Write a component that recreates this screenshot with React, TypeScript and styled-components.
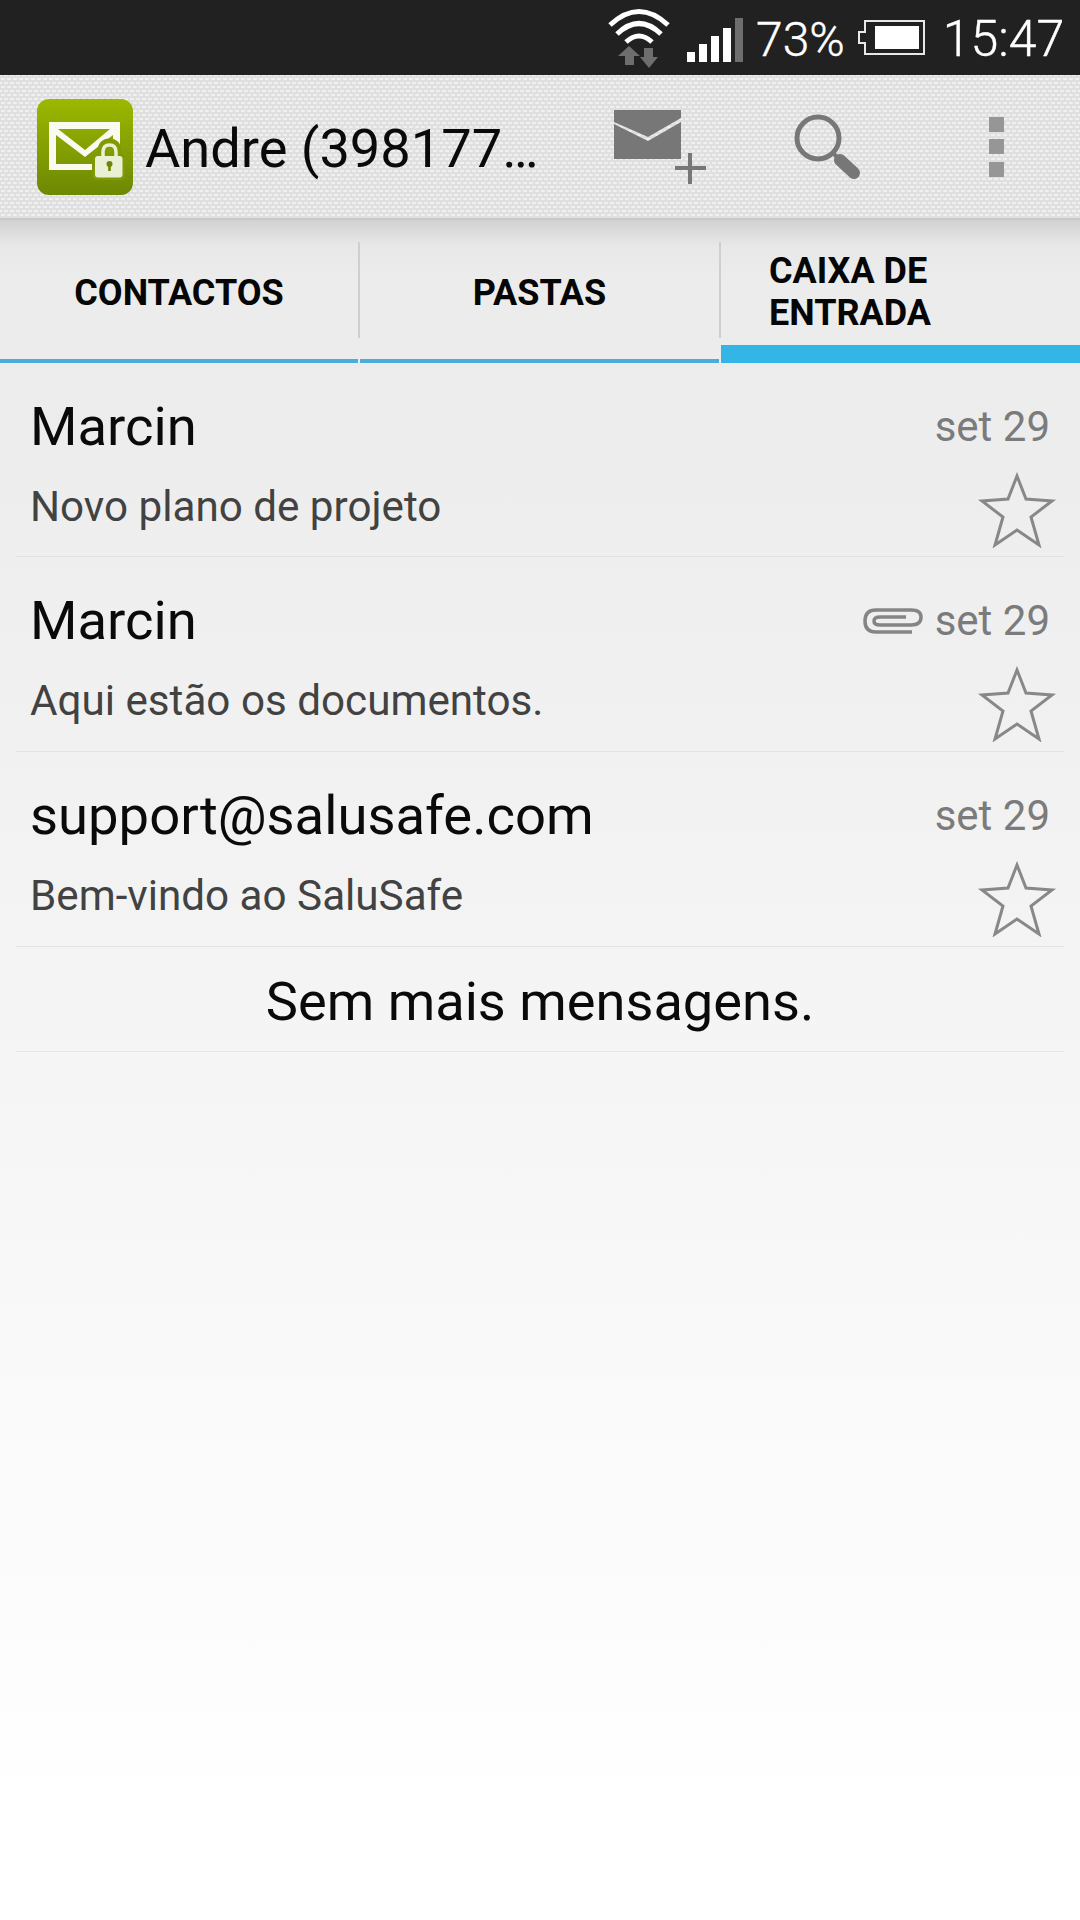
import React from 'react';
import styled, { createGlobalStyle } from 'styled-components';

const GlobalStyle = createGlobalStyle`
  html, body {
    margin: 0;
    padding: 0;
    background: #fff;
  }
  * {
    box-sizing: border-box;
  }
`;

const Screen = styled.div`
  width: 1080px;
  height: 1920px;
  overflow: hidden;
  display: flex;
  flex-direction: column;
  font-family: Roboto, "Liberation Sans", sans-serif;
  background: linear-gradient(180deg, #ececec 360px, #ffffff 1820px);
`;

const StatusBar = styled.div`
  height: 75px;
  background: #212121;
  display: flex;
  align-items: flex-start;
  flex-shrink: 0;
  padding-left: 600px;
  color: #fff;
`;

const StatusText = styled.span<{ $left: number; $size: number }>`
  font-size: ${(p) => p.$size}px;
  line-height: 79px;
  font-weight: 300;
  margin-left: ${(p) => p.$left}px;
  white-space: nowrap;
  -webkit-text-stroke: 0.4px #fff;
`;

const ActionBar = styled.div`
  height: 145px;
  flex-shrink: 0;
  display: flex;
  align-items: center;
  padding-left: 37px;
  background-color: #dfdfdf;
  background-image:
    radial-gradient(ellipse 2.4px 1.5px, #f0f0f0 70%, transparent 100%),
    radial-gradient(ellipse 2.4px 1.5px, #f0f0f0 70%, transparent 100%);
  background-size: 6px 8px;
  background-position: 0 0, 3px 4px;
  border-bottom: 2px solid #c8c8c8;
`;

const AppIcon = styled.svg`
  width: 96px;
  height: 96px;
  flex-shrink: 0;
  display: block;
`;

const Title = styled.div`
  width: 432px;
  margin-left: 12px;
  padding-top: 4px;
  font-size: 54.2px;
  color: #0a0a0a;
  white-space: nowrap;
`;

const ActionButton = styled.div`
  width: 166px;
  height: 143px;
  flex-shrink: 0;
`;

const ActionIcon = styled.svg`
  width: 166px;
  height: 143px;
  display: block;
`;

const Tabs = styled.div`
  height: 143px;
  flex-shrink: 0;
  display: flex;
  background: linear-gradient(180deg, #d2d2d2 0, #e8e8e8 26px, #ececec 60px);
`;

const Tab = styled.div<{ $active?: boolean; $width: number }>`
  width: ${(p) => p.$width}px;
  flex-shrink: 0;
  display: flex;
  align-items: center;
  justify-content: ${(p) => (p.$active ? 'flex-start' : 'center')};
  padding-left: ${(p) => (p.$active ? 48 : 0)}px;
  padding-top: ${(p) => (p.$active ? 18 : 6)}px;
  border-bottom: ${(p) => (p.$active ? 18 : 4)}px solid ${(p) => (p.$active ? '#33b5e5' : '#4aaddc')};
  font-size: 36px;
  line-height: 42px;
  font-weight: 700;
  color: #060606;
`;

const TabDivider = styled.div`
  width: 2px;
  flex-shrink: 0;
  display: flex;
  flex-direction: column;
  padding: 22px 0 25px;
`;

const TabDividerLine = styled.div`
  flex: 1;
  background: #cfcfcf;
`;

const MessageList = styled.div`
  display: flex;
  flex-direction: column;
  padding: 0 16px;
`;

const Message = styled.div<{ $height: number }>`
  height: ${(p) => p.$height}px;
  display: grid;
  grid-template-columns: 1fr auto;
  grid-template-rows: 95px 1fr;
  border-bottom: 1px solid #e2e2e2;
  padding-left: 14px;
`;

const Sender = styled.div`
  font-size: 54.4px;
  line-height: 62px;
  align-self: end;
  color: #0a0a0a;
`;

const DateLine = styled.div`
  display: flex;
  align-items: center;
  justify-content: flex-end;
  align-self: end;
  padding: 0 14px 6px 0;
  font-size: 42px;
  line-height: 50px;
  color: #7b7b7b;
`;

const Clip = styled.svg`
  width: 62px;
  height: 30px;
  margin-right: 11px;
`;

const Subject = styled.div`
  font-size: 42.2px;
  line-height: 50px;
  padding-top: 24px;
  color: #424242;
`;

const Star = styled.svg`
  width: 80px;
  height: 76px;
  justify-self: end;
  margin: 14px 7px 0 0;
`;

const NoMore = styled.div`
  height: 105px;
  display: flex;
  align-items: center;
  justify-content: center;
  padding-top: 4px;
  font-size: 54.2px;
  color: #0a0a0a;
  border-bottom: 1px solid #e6e6e6;
`;

const StarIcon = () => (
  <Star viewBox="0 0 80 76">
    <path
      d="M40 4 L49 27 L75 29 L54 45 L62 73 L40 58 L18 73 L26 45 L5 29 L31 27 Z"
      fill="none"
      stroke="#888"
      strokeWidth="3"
      strokeLinejoin="miter"
    />
  </Star>
);

const messages = [
  { sender: 'Marcin', subject: 'Novo plano de projeto', clip: false, height: 194 },
  { sender: 'Marcin', subject: 'Aqui estão os documentos.', clip: true, height: 195 },
  { sender: 'support@salusafe.com', subject: 'Bem-vindo ao SaluSafe', clip: false, height: 195 },
];

const App: React.FC = () => {
  return (
    <Screen>
      <GlobalStyle />
      <StatusBar>
        <svg width="150" height="75" viewBox="600 0 150 75" style={{ flexShrink: 0 }}>
          <g fill="none" stroke="#fff" strokeWidth="5" strokeLinecap="butt">
            <path d="M610 25 Q639 -2 668 25" />
            <path d="M617 34 Q639 13 661 34" />
            <path d="M626 42 Q639 30 652 42" />
          </g>
          <path d="M629 46 L640 56 L634 56 L634 65 L625 65 L625 56 L618 56 Z" fill="#6e6e6e" />
          <path d="M644 48 L653 48 L653 57 L658 57 L649 68 L640 57 L644 57 Z" fill="#6e6e6e" />
          <rect x="687" y="52" width="8" height="10" fill="#fff" />
          <rect x="699" y="44" width="8" height="18" fill="#fff" />
          <rect x="711" y="36" width="8" height="26" fill="#fff" />
          <rect x="723" y="28" width="8" height="34" fill="#fff" />
          <rect x="735" y="18" width="8" height="44" fill="#6e6e6e" />
        </svg>
        <StatusText $left={6} $size={48}>73%</StatusText>
        <svg width="68" height="75" viewBox="0 0 68 75" style={{ flexShrink: 0, marginLeft: 13 }}>
          <path
            d="M7 21 H66 V54 H7 V43 H1 V32 H7 Z"
            fill="none"
            stroke="#e8e8e8"
            strokeWidth="2"
          />
          <rect x="17" y="26" width="44" height="23" fill="#fff" />
        </svg>
        <StatusText $left={17} $size={50}>15:47</StatusText>
      </StatusBar>
      <ActionBar>
        <AppIcon viewBox="0 0 96 96">
          <defs>
            <linearGradient id="appGrad" x1="0" y1="0" x2="0" y2="1">
              <stop offset="0" stopColor="#9cb800" />
              <stop offset="1" stopColor="#6d8804" />
            </linearGradient>
          </defs>
          <rect width="96" height="96" rx="12" fill="url(#appGrad)" />
          <path
            d="M12 23 H83 V71 H12 Z M21 30 L48 51 L73 30 Z M19 36 V65 H76 V36 L48 58 Z"
            fill="#fafaf0"
            fillRule="evenodd"
          />
          <path
            d="M65 58 V53 Q65 44 72.5 44 Q80 44 80 53 V58"
            fill="none"
            stroke="#7f9a03"
            strokeWidth="9"
          />
          <rect x="55" y="54" width="33" height="27" rx="4" fill="#7f9a03" />
          <path
            d="M66 58 V53 Q66 46 72.5 46 Q79 46 79 53 V58"
            fill="none"
            stroke="#e9f0d4"
            strokeWidth="3.5"
          />
          <rect x="58" y="57" width="27.5" height="21.5" rx="3" fill="#e9f0d4" />
          <circle cx="72.5" cy="65" r="3" fill="#6d8804" />
          <rect x="71.2" y="65" width="2.6" height="7" fill="#6d8804" />
        </AppIcon>
        <Title>Andre (398177…</Title>
        <ActionButton>
          <ActionIcon viewBox="577 75 166 143">
            <path d="M614 110 H681 V118 L648 137 L614 122 Z" fill="#777" />
            <path d="M614 124 L648 141 L681 122 V159 H614 Z" fill="#777" />
            <path d="M690 153 V184 M675 168 H706" stroke="#777" strokeWidth="4" fill="none" />
          </ActionIcon>
        </ActionButton>
        <ActionButton>
          <ActionIcon viewBox="743 75 166 143">
            <circle cx="818" cy="138" r="21" fill="none" stroke="#777" strokeWidth="5" />
            <path d="M834 154 L838 158" stroke="#777" strokeWidth="4" />
            <path d="M840 160 L854 173" stroke="#777" strokeWidth="12" strokeLinecap="round" />
          </ActionIcon>
        </ActionButton>
        <ActionButton>
          <ActionIcon viewBox="909 75 166 143">
            <rect x="989" y="117" width="15" height="15" fill="#969696" />
            <rect x="989" y="139" width="15" height="15" fill="#969696" />
            <rect x="989" y="162" width="15" height="15" fill="#969696" />
          </ActionIcon>
        </ActionButton>
      </ActionBar>
      <Tabs>
        <Tab $width={358}>CONTACTOS</Tab>
        <TabDivider><TabDividerLine /></TabDivider>
        <Tab $width={359}>PASTAS</Tab>
        <TabDivider><TabDividerLine /></TabDivider>
        <Tab $width={359} $active>CAIXA DE<br />ENTRADA</Tab>
      </Tabs>
      <MessageList>
        {messages.map((m, i) => (
          <Message key={i} $height={m.height}>
            <Sender>{m.sender}</Sender>
            <DateLine>
              {m.clip && (
                <Clip viewBox="0 0 62 30">
                  <path
                    d="M50 26 H14 Q3 26 3 15 Q3 4 14 4 H49 Q59 4 59 11 Q59 19 49 19 H18 Q12 19 12 15 Q12 11 18 11 H44"
                    fill="none"
                    stroke="#858585"
                    strokeWidth="3.5"
                  />
                </Clip>
              )}
              set 29
            </DateLine>
            <Subject>{m.subject}</Subject>
            <StarIcon />
          </Message>
        ))}
        <NoMore>Sem mais mensagens.</NoMore>
      </MessageList>
    </Screen>
  );
};

export default App;
